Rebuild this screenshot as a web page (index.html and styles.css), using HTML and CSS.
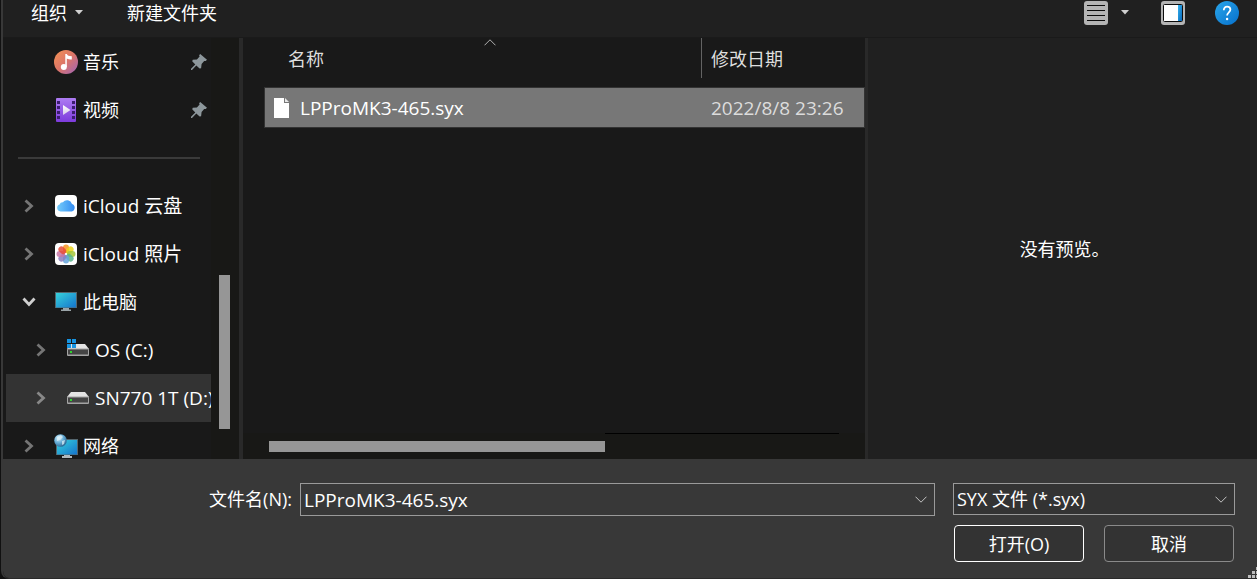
FILE: index.html
```
<!DOCTYPE html>
<html lang="zh-CN">
<head>
  <meta charset="UTF-8">
  <meta name="viewport" content="width=device-width, initial-scale=1.0">
  <title>打开</title>
  <link rel="stylesheet" href="styles.css">
</head>
<body>
  <div class="dialog">
    <header class="toolbar">
      <button class="tool-button">组织
        <svg class="arrow" width="8" height="5" viewBox="0 0 8 5"><path d="M0 0h8L4 4.6z" fill="#d0d0d0"/></svg>
      </button>
      <button class="tool-button">新建文件夹</button>
      <div class="tool-icons">
        <button class="icon-button" aria-label="视图">
          <svg width="24" height="24" viewBox="0 0 24 24">
            <rect width="24" height="24" rx="3" fill="#b4b4b4"/>
            <path d="M3 4.5h18M3 9.5h18M3 14.5h18M3 19.5h18" stroke="#0c0c0c"/>
          </svg>
        </button>
        <button class="icon-button view-more" aria-label="更多选项">
          <svg width="8" height="5" viewBox="0 0 8 5"><path d="M0 0h8L4 4.6z" fill="#d0d0d0"/></svg>
        </button>
        <button class="icon-button preview-toggle" aria-label="预览窗格">
          <svg width="24" height="24" viewBox="0 0 24 24">
            <defs><linearGradient id="pane" x2="1" y2="1"><stop stop-color="#36b4f2"/><stop offset="1" stop-color="#0666b8"/></linearGradient></defs>
            <rect width="24" height="24" rx="3" fill="#b4b4b4"/>
            <rect x="2.5" y="3.500" width="19" height="17" rx="1" fill="#fff" stroke="#0c0c0c"/>
            <rect x="17" y="4" width="4" height="16" fill="url(#pane)"/>
          </svg>
        </button>
        <button class="icon-button" aria-label="帮助">
          <svg width="24" height="24" viewBox="0 0 24 24">
            <defs><linearGradient id="help" x2="1" y2="1"><stop stop-color="#2aa6ea"/><stop offset="1" stop-color="#0670cc"/></linearGradient></defs>
            <circle cx="12" cy="12" r="12" fill="url(#help)"/>
            <path d="M8.800 9.200c0-2.200 1.400-3.600 3.300-3.600s3.300 1.200 3.300 3c0 2.700-3.300 3-3.300 6" fill="none" stroke="#fff" stroke-width="1.800"/>
            <circle cx="12.100" cy="18" r="1.200" fill="#fff"/>
          </svg>
        </button>
      </div>
    </header>

    <main class="panes">
      <nav class="sidebar">
        <ul class="tree">
          <li class="row">
            <svg class="row-icon" width="24" height="24" viewBox="0 0 24 24">
              <defs><linearGradient id="music" x2="1" y2="1"><stop stop-color="#f39252"/><stop offset=".5" stop-color="#dc7569"/><stop offset="1" stop-color="#9d64bb"/></linearGradient></defs>
              <circle cx="12" cy="12" r="12" fill="url(#music)"/>
              <circle cx="9.800" cy="17" r="3" fill="#fff"/>
              <path d="M11.300 17V4h1.500c.5 1.800 2.200 2.200 5 2.200v3.300c-2 0-3.800-.2-5-1V17z" fill="#fff"/>
            </svg>
            <a href="#">音乐</a>
            <svg class="pin" width="16" height="16" viewBox="0 0 16 16"><path d="M9.200 0L16 5.800l-1.300 1.300-1.500-.1-2.600 3-.5 4.200-1.500.4-3.300-3.200L1 16H0v-1.200l4.300-4.300L1.200 7.300l.6-1.500 4.100-.3 2.700-2.900-.5-1.400z" fill="#8d979c"/></svg>
          </li>
          <li class="row">
            <svg class="row-icon" width="24" height="24" viewBox="0 0 24 24">
              <defs>
                <linearGradient id="video" x2="0" y2="1"><stop stop-color="#ad7cf2"/><stop offset="1" stop-color="#7d3bdc"/></linearGradient>
                <linearGradient id="play" x2="0" y2="1"><stop stop-color="#fff"/><stop offset="1" stop-color="#d8cbe8"/></linearGradient>
              </defs>
              <rect x="2" width="20" height="24" rx="1" fill="url(#video)"/>
              <path d="M3 3h3v3H3zM3 8h3v3H3zM3 13h3v3H3zM3 18h3v3H3zM18 3h3v3h-3zM18 8h3v3h-3zM18 13h3v3h-3zM18 18h3v3h-3z" fill="#3c1d70"/>
              <path d="M9 7l7.500 5L9 17z" fill="url(#play)"/>
            </svg>
            <a href="#">视频</a>
            <svg class="pin" width="16" height="16" viewBox="0 0 16 16"><path d="M9.200 0L16 5.800l-1.300 1.300-1.500-.1-2.600 3-.5 4.200-1.500.4-3.300-3.200L1 16H0v-1.200l4.300-4.300L1.200 7.300l.6-1.500 4.100-.3 2.700-2.900-.5-1.400z" fill="#8d979c"/></svg>
          </li>
          <li class="row separator"><hr></li>
          <li class="row">
            <svg class="expander" width="10" height="14" viewBox="0 0 10 14"><path d="M1.500 1.500L7.500 7l-6 5.500" fill="none" stroke="#757575" stroke-width="2.800"/></svg>
            <svg class="row-icon" width="24" height="24" viewBox="0 0 24 24">
              <defs><linearGradient id="cloud" x2="1" y2="0"><stop stop-color="#75ccfa"/><stop offset="1" stop-color="#328bf2"/></linearGradient></defs>
              <rect x="1" y="1" width="22" height="22" rx="4" fill="#fff"/>
              <path d="M6.500 17.500a3.600 3.600 0 0 1-.9-7 3.200 3.200 0 0 1 3.300-2.300A5.200 5.200 0 0 1 18 10a3.900 3.900 0 0 1-.3 7.500z" fill="url(#cloud)"/>
            </svg>
            <a class="latin" href="#">iCloud 云盘</a>
          </li>
          <li class="row">
            <svg class="expander" width="10" height="14" viewBox="0 0 10 14"><path d="M1.500 1.500L7.500 7l-6 5.500" fill="none" stroke="#757575" stroke-width="2.800"/></svg>
            <svg class="row-icon" width="24" height="24" viewBox="0 0 24 24">
              <rect x="1" y="1" width="22" height="22" rx="4" fill="#fff"/>
              <g transform="translate(12 12)" fill-opacity=".85">
                <rect x="-3" y="-9.500" width="6" height="8.500" rx="3" fill="#f79422"/>
                <rect x="-3" y="-9.500" width="6" height="8.500" rx="3" fill="#ead51c" transform="rotate(45)"/>
                <rect x="-3" y="-9.500" width="6" height="8.500" rx="3" fill="#a3c63a" transform="rotate(90)"/>
                <rect x="-3" y="-9.500" width="6" height="8.500" rx="3" fill="#58b58c" transform="rotate(135)"/>
                <rect x="-3" y="-9.500" width="6" height="8.500" rx="3" fill="#66a5dc" transform="rotate(180)"/>
                <rect x="-3" y="-9.500" width="6" height="8.500" rx="3" fill="#8a7dc0" transform="rotate(225)"/>
                <rect x="-3" y="-9.500" width="6" height="8.500" rx="3" fill="#c878a8" transform="rotate(270)"/>
                <rect x="-3" y="-9.500" width="6" height="8.500" rx="3" fill="#e64c38" transform="rotate(315)"/>
              </g>
            </svg>
            <a class="latin" href="#">iCloud 照片</a>
          </li>
          <li class="row">
            <svg class="expander" width="14" height="10" viewBox="0 0 14 10"><path d="M1.500 1.500L7 7.500l5.500-6" fill="none" stroke="#d0d0d0" stroke-width="2.800"/></svg>
            <svg class="row-icon" width="24" height="24" viewBox="0 0 24 24">
              <defs><linearGradient id="screen" x2="1" y2="1"><stop stop-color="#36d2dc"/><stop offset="1" stop-color="#1574cc"/></linearGradient></defs>
              <rect x="1" y="2" width="22" height="16" fill="#54666e"/>
              <rect x="2" y="3" width="20" height="14.500" fill="url(#screen)"/>
              <path d="M9 18h6v1.500h2V21H7v-1.500h2z" fill="#9aa4a8"/>
            </svg>
            <a href="#">此电脑</a>
          </li>
          <li class="row child">
            <svg class="expander" width="10" height="14" viewBox="0 0 10 14"><path d="M1.500 1.500L7.500 7l-6 5.500" fill="none" stroke="#757575" stroke-width="2.800"/></svg>
            <svg class="row-icon" width="24" height="24" viewBox="0 0 24 24">
              <path d="M5 6h14l4 5H1z" fill="#e4e4e4"/>
              <rect x="1" y="10.500" width="22" height="7.500" rx="1" fill="#a4a4a4"/>
              <rect x="2" y="11.500" width="20" height="5" fill="#444"/>
              <rect x="4" y="13" width="2" height="2" fill="#2ed62e"/>
              <path d="M1 1h4v4H1zM6 1h4v4H6zM1 6h4v4H1zM6 6h4v4H6z" fill="#1694e2"/>
            </svg>
            <a class="latin" href="#">OS (C:)</a>
          </li>
          <li class="row child selected">
            <svg class="expander" width="10" height="14" viewBox="0 0 10 14"><path d="M1.500 1.500L7.500 7l-6 5.500" fill="none" stroke="#888" stroke-width="2.800"/></svg>
            <svg class="row-icon" width="24" height="24" viewBox="0 0 24 24">
              <path d="M5 6h14l4 5H1z" fill="#e4e4e4"/>
              <rect x="1" y="10.500" width="22" height="7.500" rx="1" fill="#a4a4a4"/>
              <rect x="2" y="11.500" width="20" height="5" fill="#444"/>
              <rect x="4" y="13" width="2" height="2" fill="#2ed62e"/>
            </svg>
            <a class="latin" href="#">SN770 1T (D:)</a>
          </li>
          <li class="row">
            <svg class="expander" width="10" height="14" viewBox="0 0 10 14"><path d="M1.500 1.500L7.500 7l-6 5.500" fill="none" stroke="#757575" stroke-width="2.800"/></svg>
            <svg class="row-icon" width="24" height="24" viewBox="0 0 24 24">
              <defs><radialGradient id="globe" cx=".35" cy=".3" r=".75"><stop stop-color="#d8f0fa"/><stop offset=".5" stop-color="#6ab0d8"/><stop offset="1" stop-color="#28628e"/></radialGradient></defs>
              <rect x="2" y="5" width="22" height="16" fill="#54666e"/>
              <rect x="3" y="6" width="20" height="14.500" fill="url(#screen)"/>
              <path d="M10 21h6v1h2v2H8v-2h2z" fill="#b0b8bc"/>
              <circle cx="6.500" cy="6.500" r="6.300" fill="url(#globe)"/>
              <path d="M3 3l4-2 2 2-3 3-3 1zM8 7l3-1-1 4-2 1z" fill="#e2f4fb" opacity=".7"/>
            </svg>
            <a href="#">网络</a>
          </li>
        </ul>
        <div class="scroll-y"><div class="thumb-y"></div></div>
      </nav>

      <section class="files">
        <table class="file-table">
          <thead>
            <tr>
              <th class="col-name">名称
                <svg class="sort" width="12" height="7" viewBox="0 0 12 7"><path d="M.5 6.300L6 .8l5.500 5.500" fill="none" stroke="#b0b0b0"/></svg>
              </th>
              <th class="col-date">修改日期</th>
            </tr>
          </thead>
          <tbody>
            <tr class="file">
              <td>
                <div class="file-name">
                  <svg width="15" height="20" viewBox="0 0 15 20"><path d="M0 0h10v5h5v15H0z" fill="#fff"/><path d="M11 0l4 4h-4z" fill="#e8e8e8"/></svg>
                  <span>LPProMK3-465.syx</span>
                </div>
              </td>
              <td class="date">2022/8/8 23:26</td>
            </tr>
          </tbody>
        </table>
        <div class="scroll-x"><div class="thumb-x"></div><div class="track-x"></div></div>
      </section>

      <aside class="preview">没有预览。</aside>
    </main>

    <footer class="footer">
      <div class="fields">
        <label class="name-label" for="filename">文件名(N):</label>
        <div class="combo name-combo">
          <input id="filename" type="text" value="LPProMK3-465.syx">
          <svg class="chevron" width="12" height="7" viewBox="0 0 12 7"><path d="M.5 .7L6 6.200 11.500 .7" fill="none" stroke="#c4c4c4"/></svg>
        </div>
        <div class="combo type-combo">
          <select aria-label="文件类型"><option>SYX 文件 (*.syx)</option></select>
          <svg class="chevron" width="12" height="7" viewBox="0 0 12 7"><path d="M.5 .7L6 6.200 11.500 .7" fill="none" stroke="#c4c4c4"/></svg>
        </div>
      </div>
      <div class="actions">
        <button class="btn primary">打开(O)</button>
        <button class="btn">取消</button>
      </div>
      <svg class="grip" width="9" height="11" viewBox="0 0 9 11"><path d="M8 0h3v3H8zM4 4h3v3H4zM8 4h3v3H8zM0 8h3v3H0zM4 8h3v3H4zM8 8h3v3H8z" fill="#bdbdbd"/></svg>
    </footer>
  </div>
</body>
</html>
```
FILE: styles.css
```
:root {
  --bg: #191919;
  --bar: #202020;
  --panel: #383838;
  --track: #181816;
  --thumb: #969696;
  --text: #fff;
}
* {
  margin: 0;
  padding: 0;
  box-sizing: border-box;
}
body {
  background: #111;
  color: var(--text);
  font-family: "Open Sans", "Noto Sans CJK SC", sans-serif;
  font-size: 18px;
  line-height: 24px;
}
button, input, select {
  font: inherit;
  color: inherit;
}
button {
  background: none;
  border: none;
}
a {
  color: inherit;
  text-decoration: none;
}
.dialog {
  display: flex;
  flex-direction: column;
  height: 100vh;
  margin-left: 1px;
  border-left: 2px solid var(--panel);
  border-bottom: 1px solid #2a2a2a;
  border-bottom-left-radius: 8px;
  overflow: hidden;
}

/* toolbar */
.toolbar {
  display: flex;
  align-items: center;
  height: 38px;
  padding: 0 18px 12px 28px;
  background: var(--bar);
  border-bottom: 1px solid #1a1a1a;
}
.tool-button {
  display: flex;
  align-items: center;
  gap: 8px;
  margin-right: 44px;
}
.tool-icons {
  display: flex;
  align-items: center;
  margin-left: auto;
}
.icon-button {
  display: flex;
}
.view-more {
  margin: 0 32px 0 13px;
}
.preview-toggle {
  margin-right: 30px;
}

/* panes */
.panes {
  display: flex;
  flex: 1;
  min-height: 0;
  background: var(--bg);
}
.sidebar {
  display: flex;
  flex: 0 0 240px;
  padding-left: 3px;
  border-right: 4px solid #292929;
  overflow: hidden;
}
.tree {
  flex: 1;
  min-width: 0;
  list-style: none;
}
.row {
  display: flex;
  align-items: center;
  height: 48px;
  padding: 0 4px 0 48px;
  white-space: nowrap;
  overflow: hidden;
}
.row-icon {
  flex: none;
  margin-right: 5px;
}
.expander {
  flex: none;
  width: 14px;
  margin: 0 18px 0 -32px;
}
.child {
  padding: 0 0 0 60px;
}
.selected {
  background: #333;
}
.pin {
  margin-left: auto;
}
.separator {
  padding: 0 11px 0 12px;
}
.separator hr {
  flex: 1;
  height: 2px;
  border: none;
  background: #3a3a3a;
}
.scroll-y {
  flex: 0 0 28px;
  padding: 237px 9px 30px 8px;
  background: var(--track);
}
.thumb-y {
  height: 100%;
  background: var(--thumb);
}

/* file list */
.files {
  display: flex;
  flex: 1;
  flex-direction: column;
  min-width: 0;
  padding-left: 21px;
  border-right: 3px solid #292929;
}
.file-table {
  width: 100%;
  table-layout: fixed;
  border-collapse: collapse;
}
.file-table th {
  height: 49px;
  padding-bottom: 8px;
  color: #dedede;
  font-weight: 400;
  text-align: left;
}
.file-table .col-name {
  position: relative;
  width: 437px;
  padding-left: 24px;
}
.sort {
  position: absolute;
  top: 1px;
  left: 220px;
}
.file-table .col-date {
  padding-left: 10px;
  background: linear-gradient(#636363, #636363) left top / 1px 40px no-repeat;
}
.file {
  height: 41px;
  background: #777;
  outline: 1px solid #333;
  outline-offset: -1px;
}
.file-name {
  display: flex;
  align-items: center;
  gap: 11px;
  padding-left: 10px;
}
.latin,
.file-name,
.date,
.name-combo {
  font-size: 19px;
}
.file .date {
  padding-left: 10px;
  color: #dcdcdc;
}
.scroll-x {
  display: flex;
  height: 26px;
  margin: auto 0 0 -21px;
  padding: 0 26px;
  background: var(--track);
}
.thumb-x {
  flex: 336;
  height: 11px;
  margin-top: 8px;
  background: var(--thumb);
}
.track-x {
  flex: 234;
  border-top: 1px solid #000;
}
.preview {
  display: flex;
  flex: 0 0 31%;
  align-items: center;
  justify-content: center;
  padding-left: 4px;
  background: var(--bar);
}

/* footer */
.footer {
  position: relative;
  padding: 24px 22px 16px 0;
  background: var(--panel);
}
.fields {
  display: flex;
}
.name-label {
  flex: 0 0 297px;
  padding-right: 8px;
  line-height: 32px;
  text-align: right;
}
.combo {
  position: relative;
  height: 33px;
}
.name-combo {
  flex: 1;
  margin-right: 18px;
}
.type-combo {
  flex: 0 0 282px;
  height: 32px;
}
.combo input,
.combo select {
  width: 100%;
  height: 100%;
  padding: 0 30px 0 3px;
  appearance: none;
  background: var(--panel);
  border: 1px solid #9a9a9a;
  border-radius: 0;
  outline: none;
}
.combo select {
  background: #333;
}
.chevron {
  position: absolute;
  top: 13px;
  right: 8px;
  pointer-events: none;
}
.actions {
  display: flex;
  justify-content: flex-end;
  gap: 20px;
  margin: 9px 1px 0 0;
}
.btn {
  width: 130px;
  height: 37px;
  background: #333;
  border: 1px solid #8a8a8a;
  border-radius: 4px;
}
.btn.primary {
  border-color: #fff;
}
.grip {
  position: absolute;
  right: 0;
  bottom: 0;
}
```
